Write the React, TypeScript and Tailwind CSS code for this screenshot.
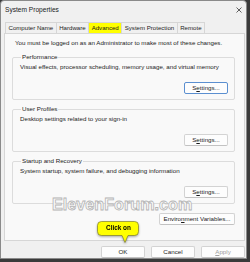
import React from "react";

function Btn({ children, w = "w-[44px]", focus = false, disabled = false }: { children: React.ReactNode; w?: string; focus?: boolean; disabled?: boolean }) {
  return (
    <div
      className={`${w} h-[12px] flex items-center justify-center rounded-[2px] bg-[#fdfdfd] text-[6.2px] leading-none ${
        focus ? "border border-[#5b8fd0]" : "border border-[#d3d3d3] border-b-[#c2c2c2]"
      } ${disabled ? "text-[#a0a0a0]" : "text-[#1b1b1b]"}`}
    >
      {children}
    </div>
  );
}

function Group({ title, desc, focus = false }: { title: string; desc: string; focus?: boolean }) {
  return (
    <fieldset className="border border-[#dcdcdc] rounded-[2px] h-[47px] px-[6px]">
      <legend className="ml-[2px] px-[1px] text-[6.2px] leading-[8px]">{title}</legend>
      <div className="pl-[1px] mt-[2px] text-[6.2px] leading-[8px]">{desc}</div>
      <div className="flex justify-end mt-[11px]">
        <Btn focus={focus}>
          S<u className="underline-offset-[1px]">e</u>ttings...
        </Btn>
      </div>
    </fieldset>
  );
}

export default function App() {
  const tabs = ["Computer Name", "Hardware", "Advanced", "System Protection", "Remote"];
  return (
    <div className="relative w-[250px] h-[262px] bg-[#3a3a3a] overflow-hidden font-['Liberation_Sans',Arial,sans-serif] text-[#1b1b1b]">
      <div className="flex flex-col w-[247px] h-[259px] bg-[#f0f0f0] border border-[#8a8a8a] rounded-t-[4px]">
        <div className="flex items-center justify-between h-[18px] pl-[4px] pr-[4px]">
          <span className="text-[6.6px] leading-none">System Properties</span>
          <svg width="6" height="6" viewBox="0 0 6 6">
            <path d="M0.5 0.5L5.5 5.5M5.5 0.5L0.5 5.5" stroke="#3a3a3a" strokeWidth="0.8" />
          </svg>
        </div>
        <div className="flex ml-[4px] mt-[3px] h-[11px]">
          {tabs.map((t, i) => (
            <div
              key={t}
              className={`flex items-center px-[2.5px] text-[6.1px] leading-none border-t border-r border-[#d6d6d6] ${
                i === 0 ? "border-l" : ""
              } ${t === "Advanced" ? "bg-[#ffff00]" : "bg-[#f0f0f0]"}`}
            >
              {t}
            </div>
          ))}
        </div>
        <div className="ml-[3px] mr-[1px] h-[208px] border border-[#d6d6d6] bg-[#f9f9f9] pt-[5px] pl-[7px] pr-[9px]">
          <div className="pl-[3px] text-[6.2px] leading-[8px]">
            You must be logged on as an Administrator to make most of these changes.
          </div>
          <div className="mt-[6px] flex flex-col gap-[5px]">
            <Group title="Performance" desc="Visual effects, processor scheduling, memory usage, and virtual memory" focus />
            <Group title="User Profiles" desc="Desktop settings related to your sign-in" />
            <Group title="Startup and Recovery" desc="System startup, system failure, and debugging information" />
          </div>
          <div className="flex justify-end mt-[9px]">
            <Btn w="w-[76px]">
              Enviro<u>n</u>ment Variables...
            </Btn>
          </div>
        </div>
        <div className="flex justify-end gap-[6px] pr-[1px] mt-[5px]">
          <Btn>OK</Btn>
          <Btn>Cancel</Btn>
          <Btn disabled>
            <u>A</u>pply
          </Btn>
        </div>
      </div>

      <div className="absolute left-[52px] top-[196px] text-[16.2px] font-bold leading-none text-[#fafafa] [-webkit-text-stroke:0.8px_#b5b5b5] pointer-events-none">
        ElevenForum.com
      </div>

      <div className="absolute left-[97px] top-[221px] w-[43px] h-[24px] drop-shadow-[0_1px_1px_rgba(0,0,0,0.35)]">
        <svg width="43" height="24" viewBox="0 0 43 24" className="absolute left-0 top-0">
          <path
            d="M4.5 0.5 H37.5 Q41.5 0.5 41.5 4.5 V10.5 Q41.5 14.5 37.5 14.5 H31 L28 21.5 L25 14.5 H4.5 Q0.5 14.5 0.5 10.5 V4.5 Q0.5 0.5 4.5 0.5 Z"
            fill="#ffff00"
            stroke="#6b6b2a"
            strokeWidth="0.6"
          />
        </svg>
        <div className="relative h-[15px] flex items-center justify-center text-[6.4px] font-bold leading-none text-black">
          Click on
        </div>
      </div>
    </div>
  );
}
